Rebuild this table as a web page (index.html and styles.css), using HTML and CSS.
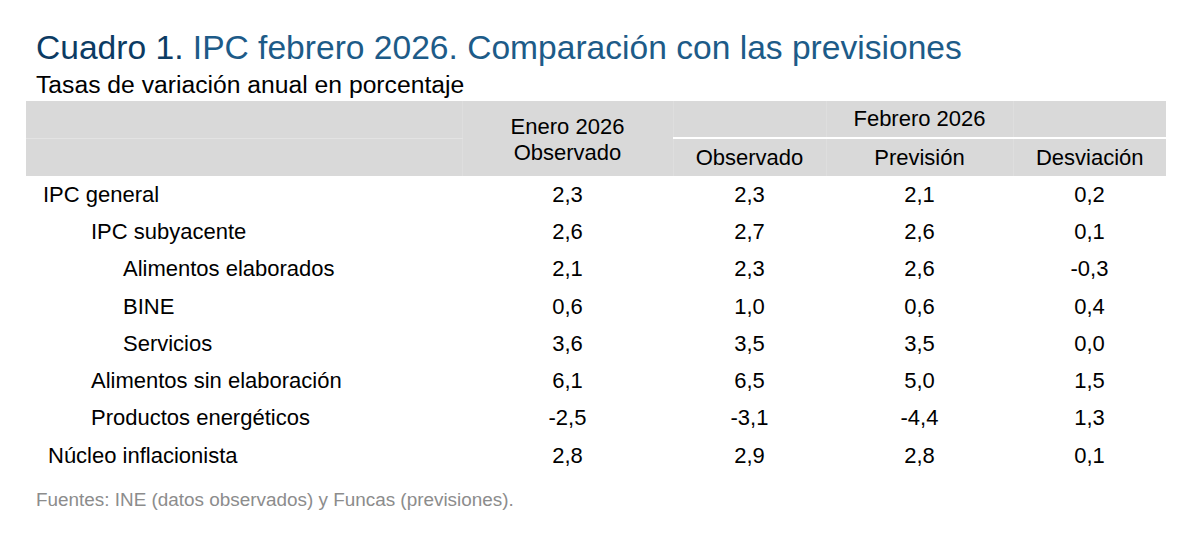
FILE: index.html
```html
<!DOCTYPE html>
<html lang="es">
<head>
<meta charset="utf-8">
<title>Cuadro 1. IPC febrero 2026</title>
<link rel="stylesheet" href="styles.css">
</head>
<body>
<div class="page">
  <h1 class="title"><span class="num">Cuadro 1.</span> IPC febrero 2026. Comparación con las previsiones</h1>
  <p class="subtitle">Tasas de variación anual en porcentaje</p>
  <table class="tbl">
    <colgroup>
      <col class="c-lab">
      <col class="c-ene">
      <col class="c-obs">
      <col class="c-prev">
      <col class="c-desv">
    </colgroup>
    <thead>
      <tr class="hr1">
        <th class="lab top"></th>
        <th class="ene" rowspan="2">Enero 2026<br>Observado</th>
        <th class="feb top"></th>
        <th class="feb top">Febrero 2026</th>
        <th class="feb top last"></th>
      </tr>
      <tr class="hr2">
        <th class="lab"></th>
        <th class="feb">Observado</th>
        <th class="feb">Previsión</th>
        <th class="feb last">Desviación</th>
      </tr>
    </thead>
    <tbody>
      <tr><td class="l l0">IPC general</td><td>2,3</td><td>2,3</td><td>2,1</td><td>0,2</td></tr>
      <tr><td class="l l1">IPC subyacente</td><td>2,6</td><td>2,7</td><td>2,6</td><td>0,1</td></tr>
      <tr><td class="l l2">Alimentos elaborados</td><td>2,1</td><td>2,3</td><td>2,6</td><td>-0,3</td></tr>
      <tr><td class="l l2">BINE</td><td>0,6</td><td>1,0</td><td>0,6</td><td>0,4</td></tr>
      <tr><td class="l l2">Servicios</td><td>3,6</td><td>3,5</td><td>3,5</td><td>0,0</td></tr>
      <tr><td class="l l1">Alimentos sin elaboración</td><td>6,1</td><td>6,5</td><td>5,0</td><td>1,5</td></tr>
      <tr><td class="l l1">Productos energéticos</td><td>-2,5</td><td>-3,1</td><td>-4,4</td><td>1,3</td></tr>
      <tr><td class="l l0b">Núcleo inflacionista</td><td>2,8</td><td>2,9</td><td>2,8</td><td>0,1</td></tr>
    </tbody>
  </table>
  <p class="source">Fuentes: INE (datos observados) y Funcas (previsiones).</p>
</div>
</body>
</html>
```

FILE: styles.css
```css
html, body {
  margin: 0;
  padding: 0;
  background: #ffffff;
}

body {
  font-family: "Liberation Sans", Arial, Helvetica, sans-serif;
  color: #000000;
}

.page {
  padding: 28px 0 0 26px;
}

.title {
  margin: 0 0 2px 10px;
  font-size: 33.6px;
  line-height: 40px;
  font-weight: normal;
  color: #1d5b88;
  white-space: nowrap;
}

.title .num {
  color: #0c3b63;
}

.subtitle {
  margin: 0 0 1px 10px;
  font-size: 24.7px;
  line-height: 30px;
  color: #000000;
  white-space: nowrap;
}

.tbl {
  border-collapse: collapse;
  table-layout: fixed;
  width: 1140px;
  font-size: 22px;
}

.c-lab { width: 436px; }
.c-ene { width: 211px; }
.c-obs { width: 153px; }
.c-prev { width: 187px; }
.c-desv { width: 153px; }

.tbl th {
  background: #d9d9d9;
  font-weight: normal;
  padding: 0;
  text-align: center;
  line-height: 26px;
  border-left: 1px solid #dedede;
}

.tbl th.lab {
  border-left: none;
}

.hr1 th {
  height: 36px;
  vertical-align: middle;
  padding-bottom: 0;
}

.hr2 th {
  height: 37px;
  vertical-align: middle;
}

.hr1 th.lab {
  border-bottom: 1px solid #e3e3e3;
}

.hr1 th.feb {
  border-bottom: 2px solid #ffffff;
}

.tbl th.ene {
  line-height: 26px;
  padding-top: 2px;
}

.tbl td {
  height: 37.3px;
  padding: 0;
  text-align: center;
  vertical-align: middle;
  line-height: 26px;
}

.tbl td.l {
  text-align: left;
}

.l0 { padding-left: 17px !important; }
.l0b { padding-left: 22px !important; }
.l1 { padding-left: 65px !important; }
.l2 { padding-left: 97px !important; }

.source {
  margin: 14px 0 0 10px;
  font-size: 18.9px;
  line-height: 24px;
  color: #8c8c8c;
  white-space: nowrap;
}
```
